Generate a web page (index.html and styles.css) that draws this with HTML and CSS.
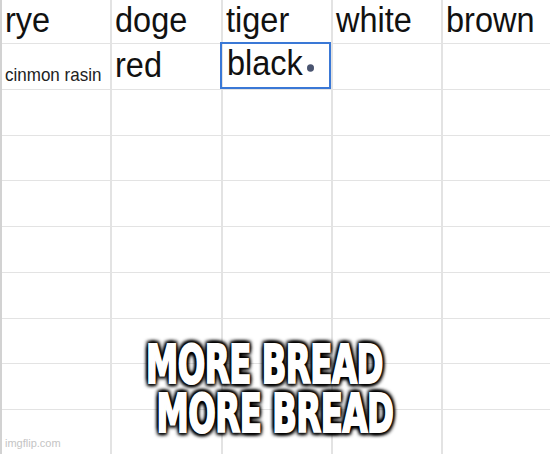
FILE: index.html
```html
<!DOCTYPE html>
<html>
<head>
<meta charset="utf-8">
<link rel="stylesheet" href="styles.css">
</head>
<body>
<div class="page">
  <div class="sheet">
    <div class="cell head"><span class="txt">rye</span></div>
    <div class="cell head"><span class="txt">doge</span></div>
    <div class="cell head"><span class="txt">tiger</span></div>
    <div class="cell head"><span class="txt">white</span></div>
    <div class="cell head"><span class="txt">brown</span></div>

    <div class="cell small"><span class="txt">cinmon rasin</span></div>
    <div class="cell big r2"><span class="txt">red</span></div>
    <div class="cell big r2b selected"><span class="txt">black<span class="dot"></span></span></div>
    <div class="cell"></div>
    <div class="cell"></div>

    <div class="cell"></div><div class="cell"></div><div class="cell"></div><div class="cell"></div><div class="cell"></div>
    <div class="cell"></div><div class="cell"></div><div class="cell"></div><div class="cell"></div><div class="cell"></div>
    <div class="cell"></div><div class="cell"></div><div class="cell"></div><div class="cell"></div><div class="cell"></div>
    <div class="cell"></div><div class="cell"></div><div class="cell"></div><div class="cell"></div><div class="cell"></div>
    <div class="cell"></div><div class="cell"></div><div class="cell"></div><div class="cell"></div><div class="cell"></div>
    <div class="cell"></div><div class="cell"></div><div class="cell"></div><div class="cell"></div><div class="cell"></div>
    <div class="cell"></div><div class="cell"></div><div class="cell"></div><div class="cell"></div><div class="cell"></div>
    <div class="cell"></div><div class="cell"></div><div class="cell"></div><div class="cell"></div><div class="cell"></div>
  </div>

  <div class="caption">
    <div class="cap-line first"><span class="cap-text">MORE BREAD</span></div>
    <div class="cap-line"><span class="cap-text">MORE BREAD</span></div>
  </div>

  <div class="watermark">imgflip.com</div>
</div>
</body>
</html>
```

FILE: styles.css
```css
html, body {
  margin: 0;
  padding: 0;
  background: #ffffff;
}

.page {
  position: relative;
  width: 550px;
  height: 454px;
  overflow: hidden;
  background: #ffffff;
  font-family: "Liberation Sans", Arial, sans-serif;
  color: #111111;
}

.sheet {
  display: grid;
  grid-template-columns: 108px 109px 108px 108px 107px;
  grid-template-rows: 43px;
  grid-auto-rows: 44.75px;
  column-gap: 2px;
  row-gap: 1px;
  background: #e3e3e3;
  border-left: 2px solid #d2d2d2;
  height: 470px;
}

.cell {
  background: #ffffff;
  position: relative;
  padding-left: 3px;
  white-space: nowrap;
}

.txt {
  display: inline-block;
  transform: scaleY(1.08);
  transform-origin: 0 80%;
}

.head,
.big {
  font-size: 32.5px;
  line-height: 38px;
}

.head {
  padding-top: 2px;
}

.r2 {
  padding-top: 3px;
}

.r2b {
  padding-top: 1px;
  padding-left: 4px;
}

.small {
  font-size: 17px;
  line-height: 20px;
  padding-top: 22px;
  color: #222222;
}

.selected::after {
  content: "";
  position: absolute;
  left: -3px;
  top: -2px;
  right: 0;
  bottom: 0;
  border: 2px solid #3a78d6;
}

.dot {
  display: inline-block;
  width: 7px;
  height: 7px;
  border-radius: 50%;
  background: #4a5470;
  margin-left: 4px;
  vertical-align: 3px;
}

.caption {
  position: absolute;
  left: 0;
  right: 0;
  top: 340px;
}

.cap-line {
  height: 49px;
  display: flex;
  align-items: center;
  justify-content: center;
}

.cap-line.first {
  padding-right: 21px;
}

.cap-text {
  display: inline-block;
  font-family: "DejaVu Sans Condensed", "DejaVu Sans", sans-serif;
  font-stretch: condensed;
  font-weight: bold;
  font-size: 36px;
  line-height: 29px;
  letter-spacing: -0.5px;
  color: #ffffff;
  -webkit-text-stroke: 1.4px #ffffff;
  transform: scaleY(1.5);
  text-shadow:
    0 0 2px #000,
    0 0 2px #000,
    0 0 3px #000,
    0 0 4px #000,
    2px 2px 3px #000,
    -2px -2px 3px #000,
    2px -2px 3px #000,
    -2px 2px 3px #000;
}

.watermark {
  position: absolute;
  left: 5px;
  top: 436px;
  font-size: 11px;
  line-height: 14px;
  color: #c4c4c4;
}
```
